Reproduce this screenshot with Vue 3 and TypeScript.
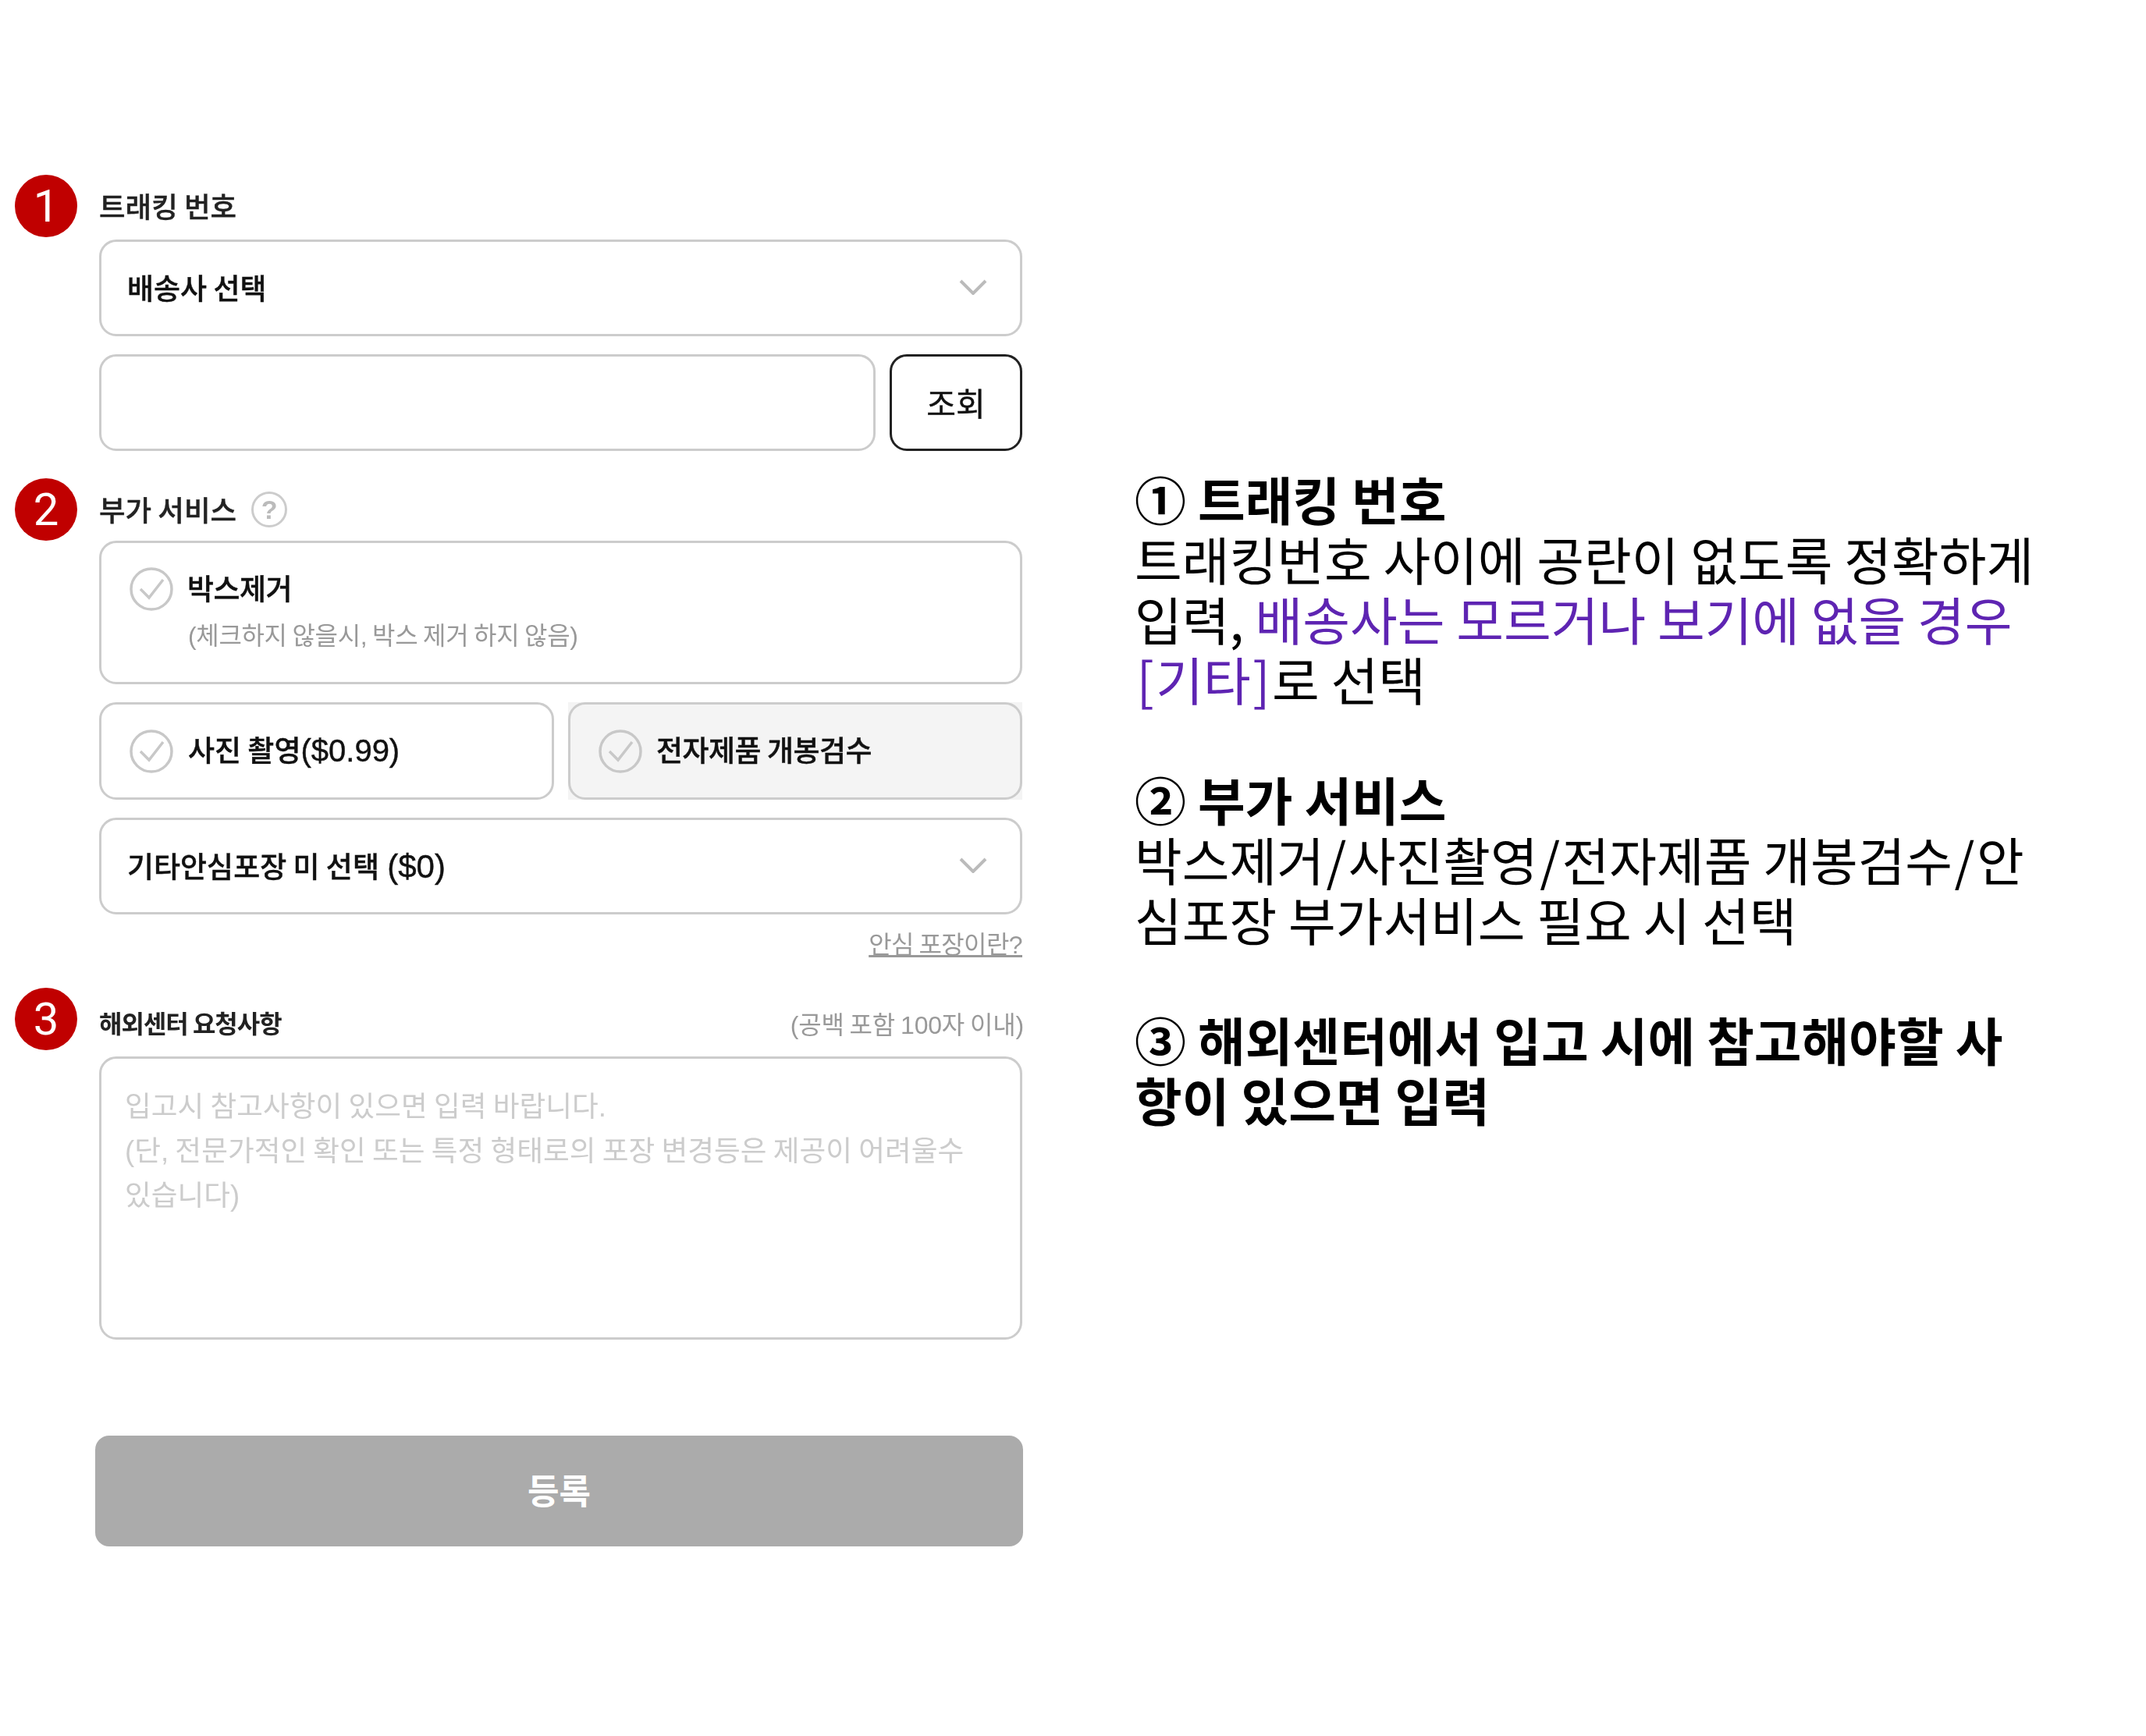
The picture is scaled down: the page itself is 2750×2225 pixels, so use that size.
<script setup lang="ts">
const placeholder =
  '입고시 참고사항이 있으면 입력 바랍니다.\n(단, 전문가적인 확인 또는 특정 형태로의 포장 변경등은 제공이 어려울수 있습니다)'
</script>

<template>
  <div class="page">
    <form class="form" @submit.prevent>
      <section class="section first">
        <div class="head">
          <span class="badge">1</span>
          <label class="label">트래킹 번호</label>
        </div>
        <div class="body tight">
          <div class="field select">
            <span>배송사 선택</span>
            <svg class="chevron" viewBox="0 0 36 20" width="36" height="20">
              <path d="M2 2 L18 18 L34 2" />
            </svg>
          </div>
          <div class="row">
            <input class="field grow" type="text" />
            <button class="lookup" type="button">조회</button>
          </div>
        </div>
      </section>

      <section class="section second">
        <div class="head">
          <span class="badge">2</span>
          <label class="label">부가 서비스</label>
          <span class="help">?</span>
        </div>
        <div class="body">
          <div class="field option tall">
            <svg class="check" viewBox="0 0 56 56" width="56" height="56">
              <circle cx="28" cy="28" r="26" />
              <path d="M14 28 L25 39 L43 16" />
            </svg>
            <div class="option-text">
              <div class="option-title condensed">박스제거</div>
              <div class="option-sub">(체크하지 않을시, 박스 제거 하지 않음)</div>
            </div>
          </div>
          <div class="pair">
            <div class="field option">
              <svg class="check" viewBox="0 0 56 56" width="56" height="56">
                <circle cx="28" cy="28" r="26" />
                <path d="M14 28 L25 39 L43 16" />
              </svg>
              <div class="option-title raise">사진 촬영<span class="price">($0.99)</span></div>
            </div>
            <div class="shade">
              <div class="field option selected">
                <svg class="check" viewBox="0 0 56 56" width="56" height="56">
                  <circle cx="28" cy="28" r="26" />
                  <path d="M14 28 L25 39 L43 16" />
                </svg>
                <div class="option-title raise condensed">전자제품 개봉검수</div>
              </div>
            </div>
          </div>
          <div class="field select">
            <span>기타안심포장 미 선택 <span class="price gap">($0)</span></span>
            <svg class="chevron" viewBox="0 0 36 20" width="36" height="20">
              <path d="M2 2 L18 18 L34 2" />
            </svg>
          </div>
          <a class="link">안심 포장이란?</a>
        </div>
      </section>

      <section class="section third">
        <div class="head">
          <span class="badge">3</span>
          <label class="label small">해외센터 요청사항</label>
          <span class="note">(공백 포함 100자 이내)</span>
        </div>
        <div class="body note-body">
          <textarea class="field area" :placeholder="placeholder"></textarea>
        </div>
      </section>

      <button class="submit" type="button">등록</button>
    </form>

    <aside class="guide">
      <div class="block">
        <p class="strong">① 트래킹 번호</p>
        <p>트래킹번호 사이에 공란이 없도록 정확하게 입력, <span class="accent">배송사는 모르거나 보기에 없을 경우 <span class="wide">[</span>기타<span class="wide">]</span></span>로 선택</p>
      </div>
      <div class="block">
        <p class="strong">② 부가 서비스</p>
        <p>박스제거<span class="wide">/</span>사진촬영<span class="wide">/</span>전자제품 개봉검수<span class="wide">/</span>안심포장 부가서비스 필요 시 선택</p>
      </div>
      <div class="block">
        <p class="strong">③ 해외센터에서 입고 시에 참고해야할 사항이 있으면 입력</p>
      </div>
    </aside>
  </div>
</template>

<style>
html,
body {
  margin: 0;
  background: #fff;
}
</style>

<style scoped>
.page {
  width: 2750px;
  height: 2225px;
  box-sizing: border-box;
  padding: 224px 0 0 19px;
  display: flex;
  align-items: flex-start;
  overflow: hidden;
  font-family: "Liberation Sans", "Noto Sans CJK KR", sans-serif;
  color: #111;
}
.form * {
  word-spacing: -0.054em;
}
.form {
  width: 1292px;
  display: flex;
  flex-direction: column;
}
.section {
  display: flex;
  flex-direction: column;
}
.second {
  margin-top: 35px;
}
.third {
  margin-top: 35px;
}
.head {
  display: flex;
  align-items: center;
  gap: 28px;
  height: 80px;
}
.badge {
  width: 80px;
  height: 80px;
  flex: none;
  border-radius: 50%;
  background: #c00000;
  color: #fff;
  display: flex;
  align-items: center;
  justify-content: center;
  font-family: Roboto, "Liberation Sans", sans-serif;
  font-weight: 400;
  font-size: 58px;
}
.label,
.select,
.option-title,
.option-sub,
.lookup,
.link,
.note,
.area,
.help,
.check {
  filter: blur(0.6px);
}
.label {
  font-size: 36.5px;
  font-weight: 500;
  line-height: 44px;
  padding-top: 5px;
  color: #222;
  -webkit-text-stroke: 0.4px #222;
}
.label.small {
  font-size: 32px;
  font-weight: 700;
  letter-spacing: -1px;
  padding-top: 14px;
  -webkit-text-stroke: 0;
}
.help {
  width: 46px;
  height: 46px;
  margin-left: -9px;
  box-sizing: border-box;
  border: 3px solid #ccc;
  border-radius: 50%;
  color: #bbb;
  font-family: "Liberation Sans", sans-serif;
  font-weight: 700;
  font-size: 34px;
  line-height: 40px;
  text-align: center;
}
.note {
  margin-left: auto;
  margin-right: -1px;
  padding-top: 10px;
  font-size: 32px;
  color: #999;
  letter-spacing: -0.2px;
}
.body {
  margin-left: 108px;
  width: 1183px;
  display: flex;
  flex-direction: column;
  gap: 23px;
}
.tight {
  margin-top: 3px;
}
.note-body {
  margin-top: 8px;
}
.field {
  box-sizing: border-box;
  height: 124px;
  border: 3px solid #ccc;
  border-radius: 22px;
  background: #fff;
}
.select {
  display: flex;
  align-items: center;
  justify-content: space-between;
  padding: 0 42px 2px 33px;
  font-size: 37px;
  font-weight: 500;
  -webkit-text-stroke: 0.4px #111;
}
.price {
  font-size: 40px;
}
.price.gap {
  margin-left: 2px;
  font-size: 42px;
}
.chevron {
  fill: none;
  stroke: #bbb;
  stroke-width: 4;
}
.row {
  display: flex;
  gap: 18px;
}
.grow {
  flex: 1;
  min-width: 0;
  outline: none;
}
.lookup {
  width: 170px;
  height: 124px;
  box-sizing: border-box;
  border: 3px solid #222;
  border-radius: 22px;
  background: #fff;
  color: #111;
  font-family: inherit;
  font-size: 41px;
  padding: 0 0 2px;
  -webkit-text-stroke: 0.4px #111;
}
.option {
  display: flex;
  align-items: center;
  gap: 19px;
  padding-left: 36px;
}
.tall {
  height: 184px;
  align-items: flex-start;
  padding-top: 31px;
}
.check {
  flex: none;
  fill: none;
  stroke: #c8c8c8;
  stroke-width: 3.5;
}
.option-title {
  font-size: 37px;
  font-weight: 500;
  -webkit-text-stroke: 0.4px #111;
}
.condensed {
  letter-spacing: -0.5px;
  margin-left: -1px;
}
.raise {
  margin-top: -5px;
}
.option-text {
  display: flex;
  flex-direction: column;
  margin-top: -1px;
}
.option-sub {
  margin-top: 9px;
  font-size: 32px;
  color: #999;
  letter-spacing: -0.35px;
}
.pair {
  display: grid;
  grid-template-columns: 583px 582px;
  gap: 18px;
}
.pair .field {
  height: 125px;
}
.shade {
  background: #f4f4f4;
}
.selected {
  background: #f4f4f4;
}
.link {
  align-self: flex-end;
  margin-top: -4px;
  font-size: 32px;
  line-height: 40px;
  color: #999;
  letter-spacing: -0.6px;
  text-decoration: underline;
}
.area {
  display: block;
  width: 100%;
  height: 363px;
  padding: 33px 30px 28px 30px;
  resize: none;
  outline: none;
  font-family: inherit;
  font-size: 36.7px;
  line-height: 57px;
  word-break: keep-all;
  color: #333;
}
.area::placeholder {
  color: #ccc;
  opacity: 1;
}
.submit {
  width: 1189px;
  height: 142px;
  margin: 123px 0 0 103px;
  padding: 0 0 4px;
  border: 0;
  border-radius: 18px;
  background: #ababab;
  color: #fff;
  font-family: inherit;
  font-size: 44px;
  font-weight: 700;
}
.guide {
  width: 1160px;
  margin: 376px 0 0 143px;
  font-family: "Noto Sans CJK KR", sans-serif;
  font-size: 66px;
  line-height: 77px;
  color: #000;
  word-break: break-all;
}
.guide p {
  margin: 0;
}
.block + .block {
  margin-top: 77px;
}
.strong {
  font-weight: 700;
}
.accent {
  color: #5e24b2;
}
.wide {
  padding: 0 2.5px;
}
</style>
